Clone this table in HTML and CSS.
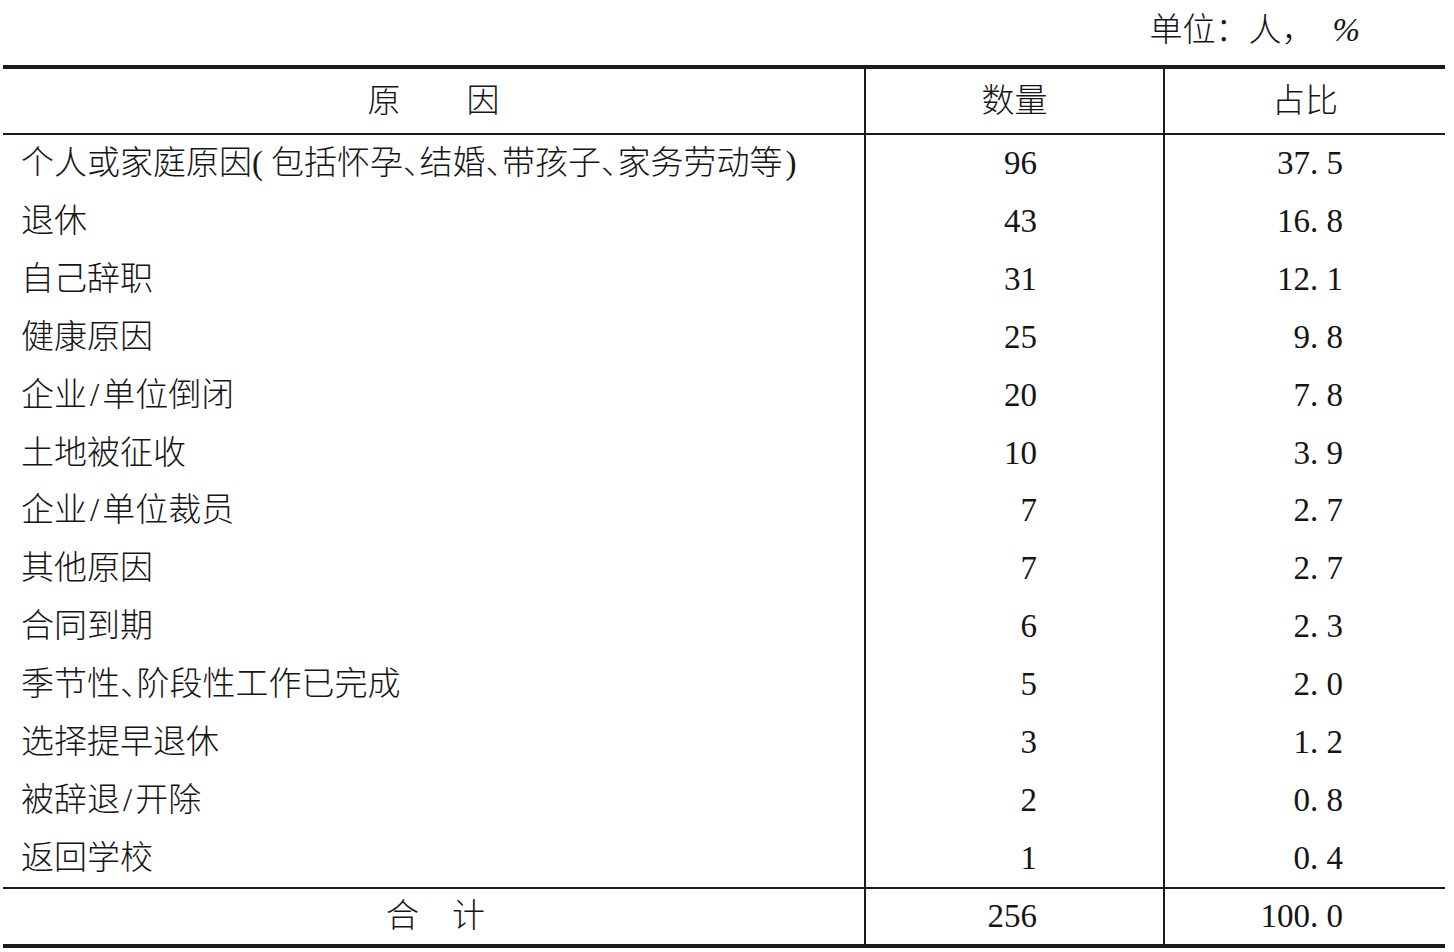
FILE: index.html
```html
<!DOCTYPE html>
<html lang="zh-CN">
<head>
<meta charset="utf-8">
<title>原因统计</title>
<link rel="stylesheet" href="styles.css">
</head>
<body>
<div class="page">
  <div class="unit">单位：人，<span class="pct">%</span></div>
  <table class="data">
    <colgroup><col class="c1"><col class="c2"><col class="c3"></colgroup>
    <thead>
      <tr><th>原　　因</th><th class="sep">数量</th><th class="sep">占比</th></tr>
    </thead>
    <tbody>
      <tr><td class="name">个人或家庭原因<span class="lp">(</span>包括怀孕<span class="hw">、</span>结婚<span class="hw">、</span>带孩子<span class="hw">、</span>家务劳动等<span class="rp">)</span></td><td class="num sep">96</td><td class="pc sep">37. 5</td></tr>
      <tr><td class="name">退休</td><td class="num sep">43</td><td class="pc sep">16. 8</td></tr>
      <tr><td class="name">自己辞职</td><td class="num sep">31</td><td class="pc sep">12. 1</td></tr>
      <tr><td class="name">健康原因</td><td class="num sep">25</td><td class="pc sep">9. 8</td></tr>
      <tr><td class="name">企业<span class="sl">/</span>单位倒闭</td><td class="num sep">20</td><td class="pc sep">7. 8</td></tr>
      <tr><td class="name">土地被征收</td><td class="num sep">10</td><td class="pc sep">3. 9</td></tr>
      <tr><td class="name">企业<span class="sl">/</span>单位裁员</td><td class="num sep">7</td><td class="pc sep">2. 7</td></tr>
      <tr><td class="name">其他原因</td><td class="num sep">7</td><td class="pc sep">2. 7</td></tr>
      <tr><td class="name">合同到期</td><td class="num sep">6</td><td class="pc sep">2. 3</td></tr>
      <tr><td class="name">季节性<span class="hw">、</span>阶段性工作已完成</td><td class="num sep">5</td><td class="pc sep">2. 0</td></tr>
      <tr><td class="name">选择提早退休</td><td class="num sep">3</td><td class="pc sep">1. 2</td></tr>
      <tr><td class="name">被辞退<span class="sl">/</span>开除</td><td class="num sep">2</td><td class="pc sep">0. 8</td></tr>
      <tr><td class="name">返回学校</td><td class="num sep">1</td><td class="pc sep">0. 4</td></tr>
    </tbody>
    <tfoot>
      <tr><td class="total">合　计</td><td class="num sep">256</td><td class="pc sep">100. 0</td></tr>
    </tfoot>
  </table>
</div>
</body>
</html>
```
FILE: styles.css
```css
html, body {
  margin: 0;
  padding: 0;
  background: #ffffff;
}

body {
  font-family: "Liberation Serif", "Noto Sans CJK SC", serif;
  font-size: 33px;
  font-weight: 300;
  color: #151515;
}

.page {
  padding-left: 3px;
  width: 1442px;
}

.unit {
  height: 65px;
  box-sizing: border-box;
  display: flex;
  align-items: center;
  justify-content: flex-end;
  padding-right: 85px;
  padding-bottom: 4px;
  line-height: 1;
}

.pct {
  font-style: italic;
  margin-left: 18px;
}

.data {
  border-collapse: separate;
  border-spacing: 0;
  table-layout: fixed;
  width: 1442px;
  border-top: 4px solid #1c1c1c;
  border-bottom: 4px solid #1c1c1c;
}

.c1 { width: 861px; }
.c2 { width: 299px; }
.c3 { width: 282px; }

th, td {
  padding: 0;
  box-sizing: border-box;
  vertical-align: middle;
  line-height: 1;
  white-space: nowrap;
}

th {
  font-weight: 300;
  text-align: center;
  height: 66px;
  border-bottom: 2px solid #1c1c1c;
}

tbody td {
  height: 57.85px;
}

tfoot td {
  height: 57px;
  border-top: 2px solid #1c1c1c;
}

.sep {
  border-left: 2px solid #1c1c1c;
}

.name {
  text-align: left;
  padding-left: 18px;
}

.total {
  text-align: center;
  padding-left: 4px;
}

.num {
  text-align: right;
  padding-right: 126px;
}

.pc {
  text-align: right;
  padding-right: 102px;
}

.hw {
  font-feature-settings: "halt" 1;
}

.sl {
  margin: 0 3px;
}

.lp {
  margin-right: 8px;
}

.rp {
  margin-left: 3px;
}
```
